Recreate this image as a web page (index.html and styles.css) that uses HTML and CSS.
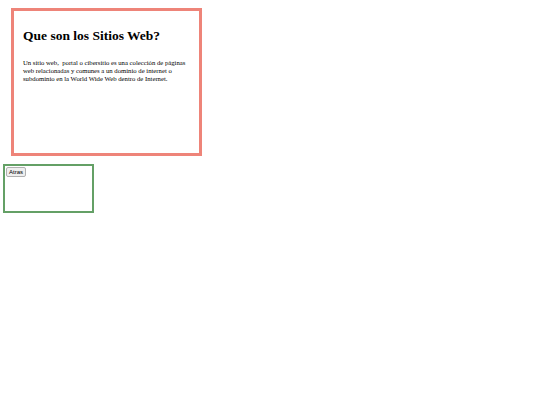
FILE: index.html
```html
<!DOCTYPE html>
<html lang="es">
<head>
<meta charset="utf-8">
<title>Sitios Web</title>
<link rel="stylesheet" href="styles.css">
</head>
<body>
<div class="card">
  <h1 class="title">Que son los Sitios Web?</h1>
  <p class="text">Un sitio web,&nbsp; portal o cibersitio es una colección de páginas web relacionadas y comunes a un dominio de internet o subdominio en la World Wide Web dentro de Internet.</p>
</div>
<div class="nav">
  <button class="back">Atras</button>
</div>
</body>
</html>
```
FILE: styles.css
```css
html, body {
  margin: 0;
  padding: 0;
  background: #ffffff;
}
body {
  font-family: "Liberation Serif", "Times New Roman", serif;
  color: #000;
}
.card {
  box-sizing: border-box;
  margin: 8px 0 0 11px;
  width: 191px;
  height: 148px;
  border: 3px solid #ee8479;
  padding: 0 0 0 9px;
}
.title {
  font-size: 13.5px;
  font-weight: bold;
  margin: 16px 0 0 0;
  line-height: 18px;
}
.text {
  font-size: 6.7px;
  line-height: 8px;
  margin: 14px 0 0 0;
  width: 168px;
}
.nav {
  box-sizing: border-box;
  margin: 8px 0 0 3px;
  width: 91px;
  height: 49px;
  border: 2px solid #64a066;
}
.back {
  margin: 1px 0 0 1px;
  font-family: "Liberation Sans", Arial, sans-serif;
  font-size: 6px;
  padding: 1px 2px;
  border: 1px solid #b0b0b0;
  border-radius: 2px;
  background: #efefef;
  color: #000;
  display: block;
}
```
